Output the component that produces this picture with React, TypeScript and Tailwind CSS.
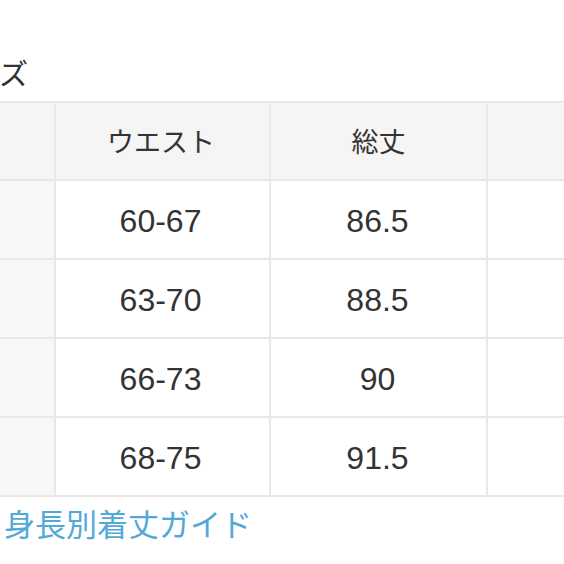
import React from "react";

const rows = [
  ["60-67", "86.5"],
  ["63-70", "88.5"],
  ["66-73", "90"],
  ["68-75", "91.5"],
];

export default function App() {
  return (
    <div className="w-[564px] h-[564px] overflow-hidden bg-white text-[#333333]" style={{ fontFamily: '"Liberation Sans", "Noto Sans CJK JP", sans-serif' }}>
      <div className="h-[101px] pt-[55px]">
        <div className="text-[29px] leading-[35px] ml-[-1px]" style={{ fontFamily: '"Noto Sans CJK JP", sans-serif' }}>ズ</div>
      </div>
      <table className="border-collapse w-[760px] table-fixed">
        <colgroup>
          <col className="w-[55px]" />
          <col className="w-[215px]" />
          <col className="w-[217px]" />
          <col className="w-[273px]" />
        </colgroup>
        <thead>
          <tr className="h-[78px] bg-[#f5f5f5]">
            <th className="border-2 border-[#e8e8e8] border-l-0 font-normal"></th>
            <th className="border-2 border-[#e8e8e8] font-normal text-[27px] pr-[3px]" style={{ fontFamily: '"Noto Sans CJK JP", sans-serif' }}>ウエスト</th>
            <th className="border-2 border-[#e8e8e8] font-normal text-[27px]" style={{ fontFamily: '"Noto Sans CJK JP", sans-serif' }}>総丈</th>
            <th className="border-2 border-[#e8e8e8] font-normal"></th>
          </tr>
        </thead>
        <tbody>
          {rows.map((r) => (
            <tr key={r[0]} className="h-[79px]">
              <td className="border-2 border-[#e8e8e8] border-l-0 bg-[#f7f7f7]"></td>
              <td className="border-2 border-[#e8e8e8] text-center text-[32px] pt-[2px] pr-[4px]">{r[0]}</td>
              <td className="border-2 border-[#e8e8e8] text-center text-[32px] pt-[2px] pr-[2px]">{r[1]}</td>
              <td className="border-2 border-[#e8e8e8]"></td>
            </tr>
          ))}
        </tbody>
      </table>
      <div className="mt-[8px] ml-[4px] text-[31px] leading-[36px] text-[#52a8d8]" style={{ fontFamily: '"Noto Sans CJK JP", sans-serif' }}>身長別着丈ガイド</div>
    </div>
  );
}
